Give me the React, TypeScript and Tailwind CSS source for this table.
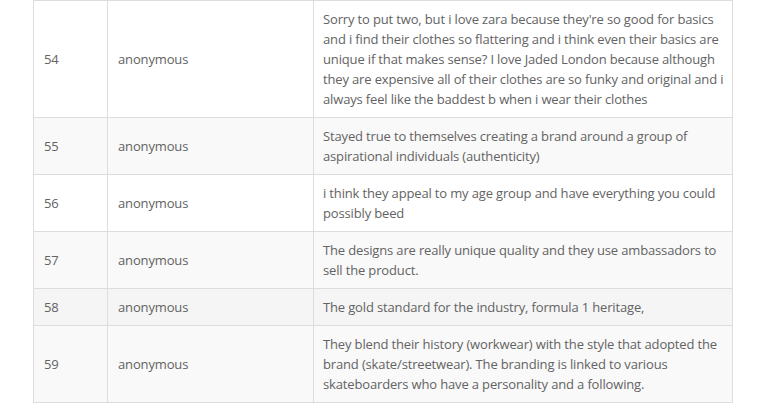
const rows = [
  {
    id: 54,
    name: "anonymous",
    text: "Sorry to put two, but i love zara because they're so good for basics and i find their clothes so flattering and i think even their basics are unique if that makes sense? I love Jaded London because although they are expensive all of their clothes are so funky and original and i always feel like the baddest b when i wear their clothes",
  },
  {
    id: 55,
    name: "anonymous",
    text: "Stayed true to themselves creating a brand around a group of aspirational individuals (authenticity)",
  },
  {
    id: 56,
    name: "anonymous",
    text: "i think they appeal to my age group and have everything you could possibly beed",
  },
  {
    id: 57,
    name: "anonymous",
    text: "The designs are really unique quality and they use ambassadors to sell the product.",
  },
  {
    id: 58,
    name: "anonymous",
    text: "The gold standard for the industry, formula 1 heritage,",
  },
  {
    id: 59,
    name: "anonymous",
    text: "They blend their history (workwear) with the style that adopted the brand (skate/streetwear). The branding is linked to various skateboarders who have a personality and a following.",
  },
];

export default function App() {
  return (
    <div className="w-full min-h-[403px] bg-white font-['Open_Sans',sans-serif]">
      <table className="ml-[33px] w-[700px] table-fixed border-collapse border border-[#dddddd] text-[13px] leading-5 tracking-[-0.15px] text-[#636363]">
        <colgroup>
          <col className="w-[74px]" />
          <col className="w-[206px]" />
          <col />
        </colgroup>
        <tbody>
          {rows.map((row, idx) => {
            // striped rows, 58 is the hovered one
            const bg =
              row.id === 58 ? "bg-[#f5f5f5]" : idx % 2 === 1 ? "bg-[#f9f9f9]" : "bg-white";
            return (
              <tr key={row.id} className={bg}>
                <td className="border border-[#dddddd] py-2 pl-2.5 pr-2 align-middle">{row.id}</td>
                <td className="border border-[#dddddd] py-2 pl-2.5 pr-2 align-middle">{row.name}</td>
                <td className="border border-[#dddddd] py-2 pl-[9px] pr-2 align-middle">{row.text}</td>
              </tr>
            );
          })}
        </tbody>
      </table>
    </div>
  );
}
